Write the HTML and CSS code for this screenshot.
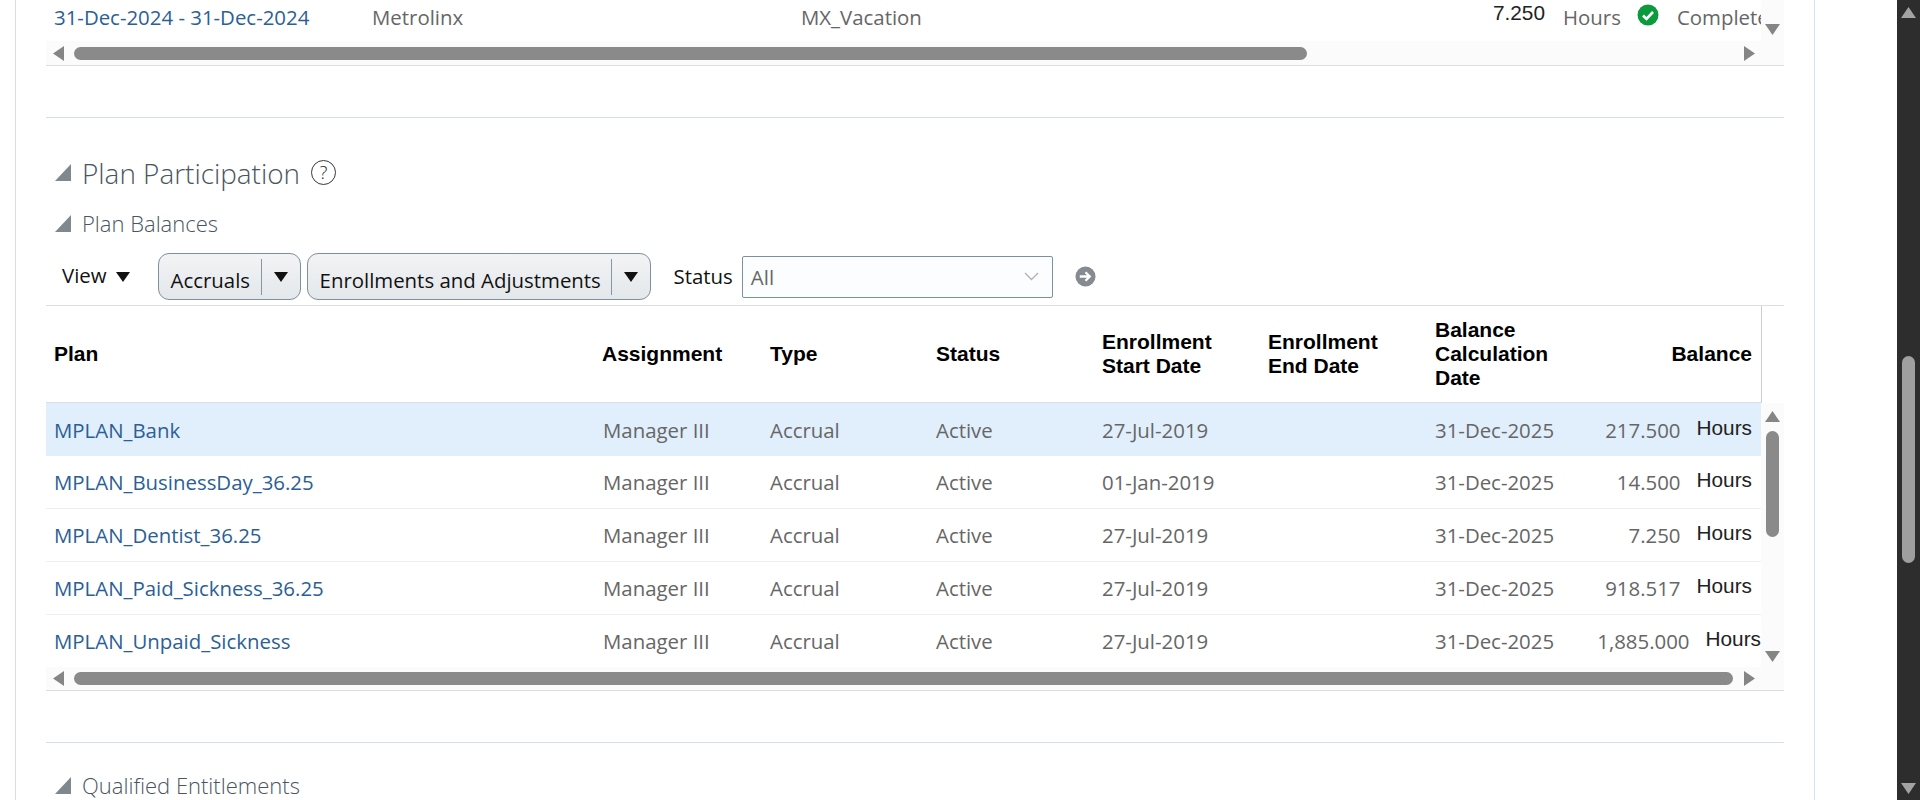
FILE: index.html

```html
<!DOCTYPE html>
<html>
<head>
<title>Plan Participation</title>
<meta charset="UTF-8">
<link rel="stylesheet" href="styles.css">
</head>
<body>

<div class="panel">

  <!-- absence records table, scrolled so only its last row shows -->
  <div class="grid-body">
    <div class="abs-row">
      <a class="link">31-Dec-2024 - 31-Dec-2024</a>
      <span class="muted">Metrolinx</span>
      <span class="muted">MX_Vacation</span>
      <span class="abs-num">7.250</span>
      <span class="muted abs-unit">Hours</span>
      <svg class="ok-icon" viewBox="0 0 22 22"><circle cx="11" cy="11" r="10.500" fill="#0b9a3e"/><path d="M6 11.500l3.500 3.500 6.500-7" fill="none" stroke="#fff" stroke-width="2.600"/></svg>
      <span class="muted abs-status">Completed</span>
    </div>
    <div class="vscroll vscroll-short">
      <svg class="arrow arrow-down" viewBox="0 0 15 11"><path d="M0 0h15L7.500 11z"/></svg>
    </div>
  </div>
  <div class="hscroll">
    <svg class="arrow-h" viewBox="0 0 11 15"><path d="M11 0v15L0 7.500z"/></svg>
    <div class="hthumb hthumb-short"></div>
    <svg class="arrow-h arrow-end" viewBox="0 0 11 15"><path d="M0 0v15L11 7.500z"/></svg>
  </div>
  <div class="divider"></div>

  <h2 class="section-title">
    <svg class="disclose" viewBox="0 0 16 17"><path d="M16 0v17H0z"/></svg>
    Plan Participation
    <span class="help">?</span>
  </h2>
  <h3 class="sub-title">
    <svg class="disclose" viewBox="0 0 16 17"><path d="M16 0v17H0z"/></svg>
    Plan Balances
  </h3>

  <div class="toolbar">
    <span class="view-menu">View</span>
    <svg class="caret caret-view" viewBox="0 0 14 10"><path d="M0 0h14L7 10z"/></svg>
    <div class="btn btn-accruals">
      <span class="btn-label">Accruals</span>
      <span class="btn-drop"><svg class="caret" viewBox="0 0 14 10"><path d="M0 0h14L7 10z"/></svg></span>
    </div>
    <div class="btn btn-enroll">
      <span class="btn-label">Enrollments and Adjustments</span>
      <span class="btn-drop"><svg class="caret" viewBox="0 0 14 10"><path d="M0 0h14L7 10z"/></svg></span>
    </div>
    <label class="status-label">Status</label>
    <div class="select">
      <span>All</span>
      <svg class="chevron" viewBox="0 0 15 9"><path d="M1 1l6.500 6.500L14 1" fill="none" stroke="#a9b3bb" stroke-width="1.300"/></svg>
    </div>
    <svg class="go-icon" viewBox="0 0 22 22"><circle cx="11" cy="11" r="10.500" fill="#858b90"/><path d="M5 11h10M11 6.500l4.500 4.500-4.500 4.500" fill="none" stroke="#fff" stroke-width="2.400"/></svg>
  </div>

  <div class="row row-head">
    <div>Plan</div>
    <div>Assignment</div>
    <div>Type</div>
    <div>Status</div>
    <div>Enrollment<br>Start Date</div>
    <div>Enrollment<br>End Date</div>
    <div>Balance<br>Calculation<br>Date</div>
    <div class="right">Balance</div>
  </div>

  <div class="grid-body">
    <div class="rows">
      <div class="row selected">
        <div><a class="link">MPLAN_Bank</a></div>
        <div class="muted">Manager III</div><div class="muted">Accrual</div><div class="muted">Active</div>
        <div class="muted">27-Jul-2019</div><div></div><div class="muted">31-Dec-2025</div>
        <div class="bal"><span class="muted">217.500</span><span class="unit">Hours</span></div>
      </div>
      <div class="row">
        <div><a class="link">MPLAN_BusinessDay_36.25</a></div>
        <div class="muted">Manager III</div><div class="muted">Accrual</div><div class="muted">Active</div>
        <div class="muted">01-Jan-2019</div><div></div><div class="muted">31-Dec-2025</div>
        <div class="bal"><span class="muted">14.500</span><span class="unit">Hours</span></div>
      </div>
      <div class="row">
        <div><a class="link">MPLAN_Dentist_36.25</a></div>
        <div class="muted">Manager III</div><div class="muted">Accrual</div><div class="muted">Active</div>
        <div class="muted">27-Jul-2019</div><div></div><div class="muted">31-Dec-2025</div>
        <div class="bal"><span class="muted">7.250</span><span class="unit">Hours</span></div>
      </div>
      <div class="row">
        <div><a class="link">MPLAN_Paid_Sickness_36.25</a></div>
        <div class="muted">Manager III</div><div class="muted">Accrual</div><div class="muted">Active</div>
        <div class="muted">27-Jul-2019</div><div></div><div class="muted">31-Dec-2025</div>
        <div class="bal"><span class="muted">918.517</span><span class="unit">Hours</span></div>
      </div>
      <div class="row row-last">
        <div><a class="link">MPLAN_Unpaid_Sickness</a></div>
        <div class="muted">Manager III</div><div class="muted">Accrual</div><div class="muted">Active</div>
        <div class="muted">27-Jul-2019</div><div></div><div class="muted">31-Dec-2025</div>
        <div class="bal bal-wide"><span class="muted">1,885.000</span><span class="unit">Hours</span></div>
      </div>
    </div>
    <div class="vscroll">
      <svg class="arrow arrow-up" viewBox="0 0 15 11"><path d="M7.500 0L15 11H0z"/></svg>
      <div class="vthumb"></div>
      <svg class="arrow arrow-down2" viewBox="0 0 15 11"><path d="M0 0h15L7.500 11z"/></svg>
    </div>
  </div>
  <div class="hscroll hscroll-low">
    <svg class="arrow-h" viewBox="0 0 11 15"><path d="M11 0v15L0 7.500z"/></svg>
    <div class="hthumb"></div>
    <svg class="arrow-h arrow-end" viewBox="0 0 11 15"><path d="M0 0v15L11 7.500z"/></svg>
  </div>
  <div class="divider"></div>

  <h3 class="sub-title sub-title-last">
    <svg class="disclose" viewBox="0 0 16 17"><path d="M16 0v17H0z"/></svg>
    Qualified Entitlements
  </h3>
</div>

<div class="page-scroll">
  <svg class="page-arrow" viewBox="0 0 15 11"><path d="M7.500 0L15 11H0z"/></svg>
  <div class="page-thumb"></div>
  <svg class="page-arrow page-arrow-down" viewBox="0 0 15 11"><path d="M0 0h15L7.500 11z"/></svg>
</div>

</body>
</html>
```

FILE: styles.css

```css
html, body { margin: 0; padding: 0; height: 100%; background: #fff; overflow: hidden; }

body {
  display: flex;
  font-family: "Open Sans", sans-serif;
  font-size: 20.400px;
  color: #111;
}

.panel {
  width: 1738px;
  height: 800px;
  margin-left: 15px;
  padding: 0 30px;
  border-left: 1px solid #d6e0ea;
  border-right: 1px solid #d6e0ea;
  overflow: hidden;
  flex: none;
}

.link { color: #2a6096; font-weight: 500; }
.muted { color: #666; font-weight: 500; }

.grid-body { display: flex; }

/* top table */
.abs-row {
  width: 1715px;
  height: 41px;
  display: grid;
  grid-template-columns: 318px 429px 599px 153px 76px 40px 92px;
  padding-left: 8px;
  box-sizing: border-box;
  line-height: 34px;
  overflow: hidden;
  white-space: nowrap;
}
.abs-num {
  font-family: "Liberation Sans", sans-serif;
  font-size: 20.800px;
  color: #222;
  text-align: right;
  padding-right: 8px;
  line-height: 26px;
}
.abs-unit { padding-left: 10px; }
.ok-icon { width: 22px; height: 22px; margin: 4px 0 0 8px; }
.abs-status { padding-left: 8px; }

.vscroll {
  width: 23px;
  flex: none;
  background: #fbfbfb;
  display: flex;
  flex-direction: column;
  align-items: center;
}
.vscroll-short { height: 41px; }
.arrow { width: 15px; height: 11px; fill: #858585; flex: none; }
.arrow-down { margin-top: 24px; }
.arrow-up { margin-top: 8px; }
.arrow-down2 { margin-top: auto; margin-bottom: 5px; }
.vthumb {
  width: 13px;
  height: 106px;
  margin-top: 9px;
  background: #8a8a8a;
  border-radius: 7px;
}

.hscroll {
  height: 24px;
  display: flex;
  align-items: center;
  padding: 0 29px 0 7px;
  background: #fbfbfb;
  border-bottom: 1px solid #d9dfe5;
}
.hscroll-low { height: 23px; }
.arrow-h { width: 11px; height: 15px; fill: #858585; flex: none; }
.arrow-end { margin-left: auto; }
.hthumb {
  width: 1659px;
  height: 13px;
  margin-left: 10px;
  background: #8a8a8a;
  border-radius: 7px;
}
.hthumb-short { width: 1233px; }

.divider { height: 1px; margin-top: 51px; background: #d6e0ea; }

/* headings */
.section-title, .sub-title {
  margin: 0;
  display: flex;
  align-items: center;
  font-weight: 300;
  color: #4a5560;
  padding-left: 9px;
}
.section-title { height: 33px; margin-top: 38px; font-size: 27.900px; }
.sub-title { height: 26px; margin-top: 21px; font-size: 22px; }
.sub-title-last { margin-top: 29px; }
.disclose { width: 16px; height: 17px; fill: #7f878f; margin-right: 11px; flex: none; }
.help {
  width: 23px;
  height: 23px;
  margin-left: 11px;
  border: 1.500px solid #33383d;
  border-radius: 50%;
  font-size: 18px;
  line-height: 23px;
  text-align: center;
  color: #22262a;
}

/* toolbar */
.toolbar {
  height: 70px;
  box-sizing: border-box;
  padding: 17px 0 5px 16px;
  display: flex;
  align-items: center;
  border-bottom: 1px solid #d9dfe5;
}
.view-menu { color: #111; margin-top: -3px; }
.caret { width: 14px; height: 10px; fill: #111; display: block; }
.caret-view { margin: 0 28px 0 9px; flex: none; }
.btn {
  height: 47px;
  box-sizing: border-box;
  display: flex;
  align-items: center;
  border: 1px solid #7d90a1;
  border-radius: 11px;
  background: linear-gradient(#f2f3f5, #e4e8eb);
  padding-left: 12px;
  flex: none;
}
.btn-accruals { width: 143px; }
.btn-enroll { width: 344px; margin-left: 6px; }
.btn-label { flex: 1; padding-top: 6px; color: #111; white-space: nowrap; font-weight: 500; }
.btn-drop {
  height: 36px;
  width: 39px;
  box-sizing: border-box;
  padding: 13px 0 0 12px;
  border-left: 1px solid #8497a7;
}
.status-label { margin-left: 23px; margin-top: -1px; color: #111; font-weight: 500; }
.select {
  width: 311px;
  height: 42px;
  box-sizing: border-box;
  margin-left: 9px;
  padding: 0 13px 0 8px;
  display: flex;
  align-items: center;
  justify-content: space-between;
  border: 1px solid #7d90a1;
  border-radius: 2px;
  background: #fcfdfe;
  color: #666;
  font-weight: 500;
  flex: none;
}
.chevron { width: 15px; height: 9px; }
.go-icon { width: 21px; height: 21px; margin-left: 22px; flex: none; }

/* plan table */
.row {
  display: grid;
  grid-template-columns: 548px 168px 166px 166px 166px 167px 166px 168px;
  width: 1715px;
  height: 53px;
  box-sizing: border-box;
  align-items: center;
  border-bottom: 1px solid #eceeef;
  white-space: nowrap;
}
.row > div { padding-left: 8px; }
.row > .muted:nth-child(2) { padding-left: 9px; }
.row-last { border-bottom: 0; height: 52px; }
.selected { background: #e1effc; border-bottom: 0; }
.row-head {
  width: 1716px;
  height: 97px;
  font-family: "Liberation Sans", sans-serif;
  font-size: 21px;
  font-weight: bold;
  line-height: 24px;
  color: #000;
  border-bottom: 1px solid #d9dfe5;
  border-right: 1px solid #c9ced3;
}
.row-head .right { text-align: right; padding-right: 9px; }
.rows { width: 1715px; flex: none; }
.bal {
  display: flex;
  justify-content: flex-end;
  align-items: center;
  padding-right: 9px;
}
.bal-wide { padding-right: 0; }
.unit {
  margin-left: 16px;
  margin-top: -4px;
  font-family: "Liberation Sans", sans-serif;
  font-size: 20.800px;
  color: #222;
}

/* browser scrollbar */
.page-scroll {
  position: fixed;
  top: 0;
  right: 0;
  bottom: 0;
  width: 23px;
  background: #2d2d2d;
  display: flex;
  flex-direction: column;
  align-items: center;
}
.page-arrow { width: 15px; height: 11px; margin-top: 7px; fill: #a3a3a3; flex: none; }
.page-arrow-down { margin-top: auto; margin-bottom: 6px; }
.page-thumb {
  width: 13px;
  height: 207px;
  margin-top: 338px;
  background: #9f9f9f;
  border-radius: 7px;
}
```
